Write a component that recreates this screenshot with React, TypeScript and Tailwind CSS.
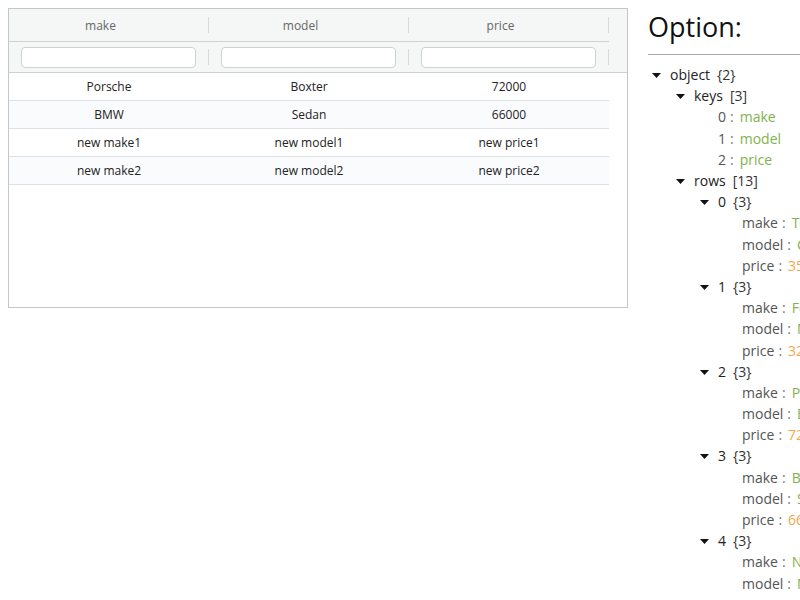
import React from 'react'

const COLUMNS = ['make', 'model', 'price']

const TABLE_ROWS = [
  { make: 'Porsche', model: 'Boxter', price: '72000' },
  { make: 'BMW', model: 'Sedan', price: '66000' },
  { make: 'new make1', model: 'new model1', price: 'new price1' },
  { make: 'new make2', model: 'new model2', price: 'new price2' },
]

const ALL_ROWS = [
  { make: 'Toyota', model: 'Celica', price: 35000 },
  { make: 'Ford', model: 'Mondeo', price: 32000 },
  { make: 'Porsche', model: 'Boxter', price: 72000 },
  { make: 'BMW', model: 'Sedan', price: 66000 },
  { make: 'Nissan', model: 'Micra', price: 31000 },
]

const FONT = { fontFamily: '"Open Sans", "Noto Sans", sans-serif' }

function Caret() {
  return (
    <svg width="9" height="5" viewBox="0 0 9 5" className="shrink-0 mt-[2px]">
      <path d="M0 0 L9 0 L4.5 5 Z" fill="#111" />
    </svg>
  )
}

function Branch({ depth, label, count, children }: { depth: number; label: string; count: string; children?: React.ReactNode }) {
  return (
    <>
      <div className="flex items-center h-[21.2px]" style={{ paddingLeft: 4 + depth * 24 }}>
        <Caret />
        <span className="ml-[9px] text-[#222]">{label}</span>
        <span className="ml-[7px] text-[#333]">{count}</span>
      </div>
      {children}
    </>
  )
}

function Leaf({ depth, k, v, color }: { depth: number; k: string; v: string | number; color: string }) {
  return (
    <div className="flex items-center h-[21.2px] whitespace-nowrap" style={{ paddingLeft: 22 + depth * 24 }}>
      <span className="text-[#555]">{k}</span>
      <span className="ml-[4px] mr-[6px] text-[#777]">:</span>
      <span style={{ color }}>{v}</span>
    </div>
  )
}

export default function App() {
  return (
    <div className="w-[800px] h-[600px] overflow-hidden bg-white flex" style={FONT}>
      {/* grid */}
      <div className="ml-2 mt-2 w-[620px] h-[300px] shrink-0 border border-[#c4c7c9] flex flex-col">
        <div className="bg-[#f5f7f7] border-b border-[#cfd2d4]">
          <div className="flex h-[33px] w-[600px] border-b border-[#cfd2d4]">
            {COLUMNS.map(c => (
              <div key={c} className="w-[200px] flex items-center">
                <span className="flex-1 text-center pr-4 pt-[2px] text-[12px] text-[#666]">{c}</span>
                <span className="w-px h-4 bg-[#d6d9db]" />
              </div>
            ))}
          </div>
          <div className="flex h-[30px] w-[600px]">
            {COLUMNS.map(c => (
              <div key={c} className="w-[200px] flex items-center">
                <div className="flex-1 px-3">
                  <input className="w-full h-[21px] rounded-[4px] border border-[#cfd2d4] bg-white outline-none" />
                </div>
                <span className="w-px h-4 bg-[#d6d9db]" />
              </div>
            ))}
          </div>
        </div>
        <div className="w-[600px]">
          {TABLE_ROWS.map((r, i) => (
            <div
              key={i}
              className={`flex h-[28px] pt-px border-b border-[#dfe2e5] text-[12px] text-[#222] ${i % 2 ? 'bg-[#fafbfd]' : 'bg-white'}`}
            >
              <div className="w-[200px] flex items-center justify-center">{r.make}</div>
              <div className="w-[200px] flex items-center justify-center">{r.model}</div>
              <div className="w-[200px] flex items-center justify-center">{r.price}</div>
            </div>
          ))}
        </div>
      </div>

      {/* option tree */}
      <div className="ml-5 w-[400px] shrink-0">
        <h1 className="mt-[11px] text-[27px] leading-[32px] pb-[11px] border-b border-[#aaa] text-[#111]">Option:</h1>
        <div className="mt-[9px] text-[14px]">
          <Branch depth={0} label="object" count="{2}">
            <Branch depth={1} label="keys" count="[3]">
              {COLUMNS.map((c, i) => (
                <Leaf key={c} depth={2} k={String(i)} v={c} color="#7fb24c" />
              ))}
            </Branch>
            <Branch depth={1} label="rows" count="[13]">
              {ALL_ROWS.map((r, i) => (
                <Branch key={i} depth={2} label={String(i)} count="{3}">
                  <Leaf depth={3} k="make" v={r.make} color="#7fb24c" />
                  <Leaf depth={3} k="model" v={r.model} color="#7fb24c" />
                  <Leaf depth={3} k="price" v={r.price} color="#f5a54a" />
                </Branch>
              ))}
            </Branch>
          </Branch>
        </div>
      </div>
    </div>
  )
}
